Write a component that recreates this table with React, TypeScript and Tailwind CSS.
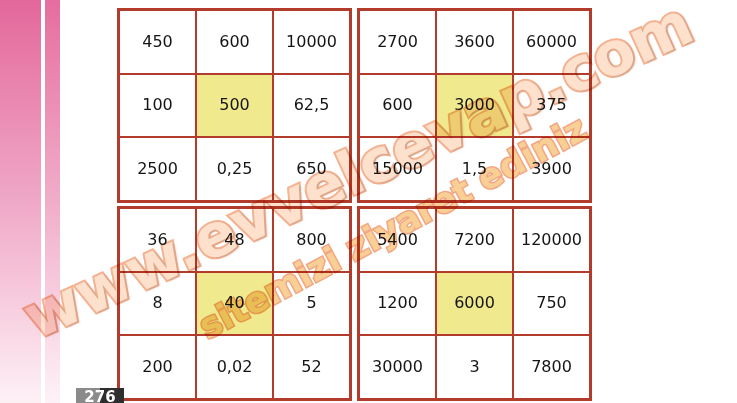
const grids: string[][] = [
  ["450", "600", "10000", "100", "500", "62,5", "2500", "0,25", "650"],
  ["2700", "3600", "60000", "600", "3000", "375", "15000", "1,5", "3900"],
  ["36", "48", "800", "8", "40", "5", "200", "0,02", "52"],
  ["5400", "7200", "120000", "1200", "6000", "750", "30000", "3", "7800"],
];

function NumberGrid({ values }: { values: string[] }) {
  return (
    <div className="grid h-[195px] grid-cols-3 grid-rows-3 gap-[2px] border-[3px] border-[#b23b2b] bg-[#b23b2b]">
      {values.map((v, i) => (
        <div
          key={i}
          className={
            i === 4
              ? "flex items-center justify-center bg-[#f0e98e] text-[16px] text-[#151515]"
              : "flex items-center justify-center bg-white text-[16px] text-[#151515]"
          }
        >
          {v}
        </div>
      ))}
    </div>
  );
}

export default function App() {
  return (
    <div className="relative isolate flex h-[403px] w-[737px] items-start overflow-hidden bg-white font-['DejaVu_Sans',sans-serif]">
      <div className="h-full w-[41px] bg-gradient-to-b from-[#e3679b] via-[#efa8c7] to-[#fdf1f6]" />
      <div className="ml-[4px] h-full w-[15px] bg-gradient-to-b from-[#e56d9f] via-[#f0adc9] to-[#fdf2f7]" />

      <div className="ml-[57px] mt-[8px] grid grid-cols-[235px_235px] gap-x-[5px] gap-y-[3px]">
        {grids.map((g, i) => (
          <NumberGrid key={i} values={g} />
        ))}
      </div>

      {/* page number */}
      <div className="absolute bottom-0 left-[76px] flex h-[15px] w-[48px]">
        <div className="w-[24px] bg-[#8a8a8a]" />
        <div className="w-[24px] bg-[#2e2e2e]" />
        <span className="absolute left-0 top-[2px] w-full text-center text-[15px] font-bold leading-none text-white">
          276
        </span>
      </div>

      {/* watermark */}
      <div className="pointer-events-none absolute left-[358px] top-[170px] -translate-x-1/2 -translate-y-1/2 -rotate-[24.5deg] whitespace-nowrap text-[60px] font-bold leading-none text-[#fddcc4] opacity-85 mix-blend-multiply [-webkit-text-stroke:4px_#f2a47c] [paint-order:stroke_fill] [text-shadow:2px_2px_2px_rgba(160,110,90,0.3)]">
        www.evvelcevap.com
      </div>
      <div className="pointer-events-none absolute left-[393px] top-[228px] -translate-x-1/2 -translate-y-1/2 -rotate-[28deg] whitespace-nowrap text-[35px] font-bold leading-none text-[#f7c47c] opacity-80 mix-blend-multiply [-webkit-text-stroke:3px_#ef9064] [paint-order:stroke_fill]">
        sitemizi ziyaret ediniz
      </div>
    </div>
  );
}
